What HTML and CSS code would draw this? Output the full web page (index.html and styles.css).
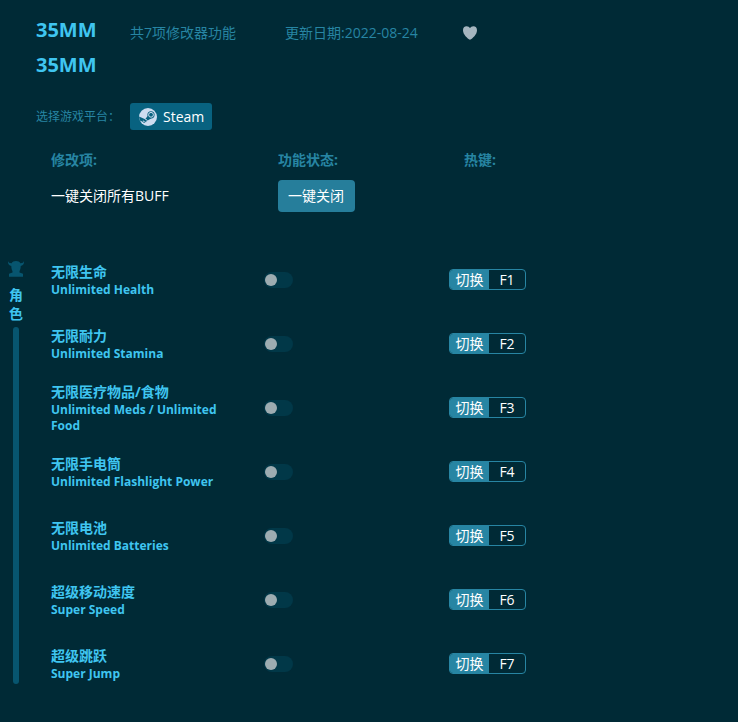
FILE: index.html
```
<!DOCTYPE html>
<html lang="zh-CN">
<head>
<meta charset="utf-8">
<title>35MM</title>
<link rel="stylesheet" href="styles.css">
</head>
<body>
<main class="page">
  <header class="top">
    <div class="titles">
      <h1 class="title">35MM</h1>
      <p class="title">35MM</p>
    </div>
    <span class="meta count">共7项修改器功能</span>
    <span class="meta date">更新日期:2022-08-24</span>
    <button class="heart" type="button" aria-label="收藏">
      <svg viewBox="0 0 14 14" width="14" height="14"><path d="M7 13.8C4.5 12.4 0 8.600 0 4.200C0 1.800 1.400.2 3.600.2C5.200.2 6.400 1 7 2.100C7.600 1 8.800.2 10.400.2C12.600.2 14 1.800 14 4.200C14 8.600 9.500 12.400 7 13.800Z"/></svg>
    </button>
  </header>

  <section class="platform">
    <span class="platform-label">选择游戏平台：</span>
    <button class="steam" type="button">
      <svg viewBox="0 0 18 18" width="18" height="18">
        <circle class="steam-disc" cx="9" cy="9" r="9"/>
        <path class="steam-arm" d="M0 8.600L6.200 11.200L8.800 7.800L12.500 10.200L8.200 12.800A2.700 2.700 0 0 1 3.300 13.600L.7 12.500Z"/>
        <circle class="steam-arm" cx="12" cy="6.800" r="3.600"/>
        <circle class="steam-ring" cx="12" cy="6.800" r="2.400"/>
        <path class="steam-ring" d="M3.900 12.900L5.300 13.500A1.500 1.500 0 1 0 6.300 11.400"/>
      </svg>
      Steam
    </button>
  </section>

  <section class="summary">
    <span class="head">修改项:</span>
    <span class="head">功能状态:</span>
    <span class="head hotkey-head">热键:</span>
    <span class="all">一键关闭所有BUFF</span>
    <button class="close-all" type="button">一键关闭</button>
  </section>

  <section class="group">
    <aside class="rail">
      <svg viewBox="0 0 16 16" width="16" height="16"><path d="M0 0C.5 1.800 1.800 2.300 3.600 2.200C4.300.7 6 0 8 0C10 0 11.700.7 12.400 2.200C14.200 2.300 15.500 1.800 16 0C16.200 2.800 15 4.600 12.700 4.900C12.700 7.500 12 9 11.500 10.200V11.500L15 12.700V15.800H1V12.700L4.500 11.500V10.200C4 9 3.300 7.500 3.300 4.900C1 4.600-.2 2.800 0 0Z"/></svg>
      <h2 class="rail-name">角色</h2>
      <div class="bar"></div>
    </aside>
    <ul class="list">
      <li class="row">
        <label class="name" for="s1">无限生命<small>Unlimited Health</small></label>
        <input class="switch" type="checkbox" role="switch" id="s1">
        <div class="key"><button class="toggle" type="button">切换</button><kbd>F1</kbd></div>
      </li>
      <li class="row">
        <label class="name" for="s2">无限耐力<small>Unlimited Stamina</small></label>
        <input class="switch" type="checkbox" role="switch" id="s2">
        <div class="key"><button class="toggle" type="button">切换</button><kbd>F2</kbd></div>
      </li>
      <li class="row">
        <label class="name" for="s3">无限医疗物品/食物<small>Unlimited Meds / Unlimited Food</small></label>
        <input class="switch" type="checkbox" role="switch" id="s3">
        <div class="key"><button class="toggle" type="button">切换</button><kbd>F3</kbd></div>
      </li>
      <li class="row">
        <label class="name" for="s4">无限手电筒<small>Unlimited Flashlight Power</small></label>
        <input class="switch" type="checkbox" role="switch" id="s4">
        <div class="key"><button class="toggle" type="button">切换</button><kbd>F4</kbd></div>
      </li>
      <li class="row">
        <label class="name" for="s5">无限电池<small>Unlimited Batteries</small></label>
        <input class="switch" type="checkbox" role="switch" id="s5">
        <div class="key"><button class="toggle" type="button">切换</button><kbd>F5</kbd></div>
      </li>
      <li class="row">
        <label class="name" for="s6">超级移动速度<small>Super Speed</small></label>
        <input class="switch" type="checkbox" role="switch" id="s6">
        <div class="key"><button class="toggle" type="button">切换</button><kbd>F6</kbd></div>
      </li>
      <li class="row">
        <label class="name" for="s7">超级跳跃<small>Super Jump</small></label>
        <input class="switch" type="checkbox" role="switch" id="s7">
        <div class="key"><button class="toggle" type="button">切换</button><kbd>F7</kbd></div>
      </li>
    </ul>
  </section>
</main>
</body>
</html>
```

FILE: styles.css
```
:root {
  --bg: #002a36;
  --bright: #3fc5f0;
  --teal: #2785a3;
  --deep: #07556f;
}

* { box-sizing: border-box; }

body {
  margin: 0;
  background: var(--bg);
  color: #fff;
  font: 14px/20px "Open Sans", "Noto Sans CJK SC", sans-serif;
}

button, kbd {
  margin: 0;
  padding: 0;
  border: 0;
  background: none;
  color: inherit;
  font: inherit;
}

.page { padding: 12px 8px 0; }

.top {
  display: flex;
  align-items: flex-start;
  padding-left: 28px;
}

.titles { width: 94px; }

.title {
  margin: 0;
  color: var(--bright);
  font-size: 20px;
  font-weight: 700;
  line-height: 35px;
}

.meta {
  color: var(--teal);
  line-height: 42px;
}

.count { width: 155px; }
.date { width: 178px; }

.heart {
  display: flex;
  padding-top: 14px;
}

.heart svg { fill: #a5b5bf; }

.platform {
  display: flex;
  align-items: center;
  margin-top: 21px;
  padding-left: 28px;
}

.platform-label {
  width: 94px;
  color: var(--teal);
  font-size: 12px;
}

.steam {
  display: flex;
  align-items: center;
  gap: 6px;
  height: 27px;
  padding: 0 8px 0 9px;
  border-radius: 3px;
  background: #086280;
  font-weight: 500;
}

.steam-disc { fill: #cddcf0; }
.steam-arm { fill: #086280; }
.steam-ring { fill: none; stroke: #cddcf0; }

.summary {
  display: grid;
  grid-template-columns: 227px 171px 1fr;
  grid-template-rows: 20px 32px;
  row-gap: 10px;
  align-items: center;
  justify-items: start;
  margin-top: 20px;
  padding-left: 43px;
}

.head {
  color: var(--teal);
  font-weight: 700;
}

.hotkey-head { padding-left: 15px; }

.close-all {
  height: 32px;
  padding: 0 11px 0 10px;
  border-radius: 4px;
  background: #267e9b;
}

.group {
  display: flex;
  gap: 27px;
  margin-top: 36px;
}

.rail {
  display: flex;
  flex-direction: column;
  align-items: center;
  width: 16px;
  padding: 13px 0 12px;
}

.rail svg {
  flex: none;
  fill: var(--deep);
}

.rail-name {
  width: 14px;
  margin: 8px 0 4px;
  color: var(--bright);
  font-size: 14px;
  font-weight: 700;
  line-height: 19px;
}

.bar {
  flex: 1;
  width: 6px;
  border-radius: 3px;
  background: var(--deep);
}

.list {
  flex: 1;
  margin: 0;
  padding: 0;
  list-style: none;
}

.row {
  display: grid;
  grid-template-columns: 213px 185px 1fr;
  align-items: center;
  min-height: 64px;
}

.name {
  padding-right: 40px;
  color: var(--bright);
  font-weight: 700;
  line-height: 20px;
}

.name small {
  display: block;
  font-size: 12px;
  line-height: 16px;
}

.switch {
  appearance: none;
  display: flex;
  align-items: center;
  width: 29px;
  height: 16px;
  margin: 0;
  padding: 0 1px;
  border-radius: 8px;
  background: #013848;
}

.switch::before {
  content: "";
  width: 12px;
  height: 12px;
  border-radius: 50%;
  background: #9dacb1;
}

.switch:checked::before { margin-left: auto; }

.key {
  display: flex;
  width: 77px;
  height: 21px;
  margin-bottom: 1px;
  border: 1px solid var(--teal);
  border-radius: 4px;
  overflow: hidden;
  line-height: 19px;
}

.toggle {
  width: 39px;
  background: var(--teal);
}

.key kbd {
  flex: 1;
  text-align: center;
}
```
